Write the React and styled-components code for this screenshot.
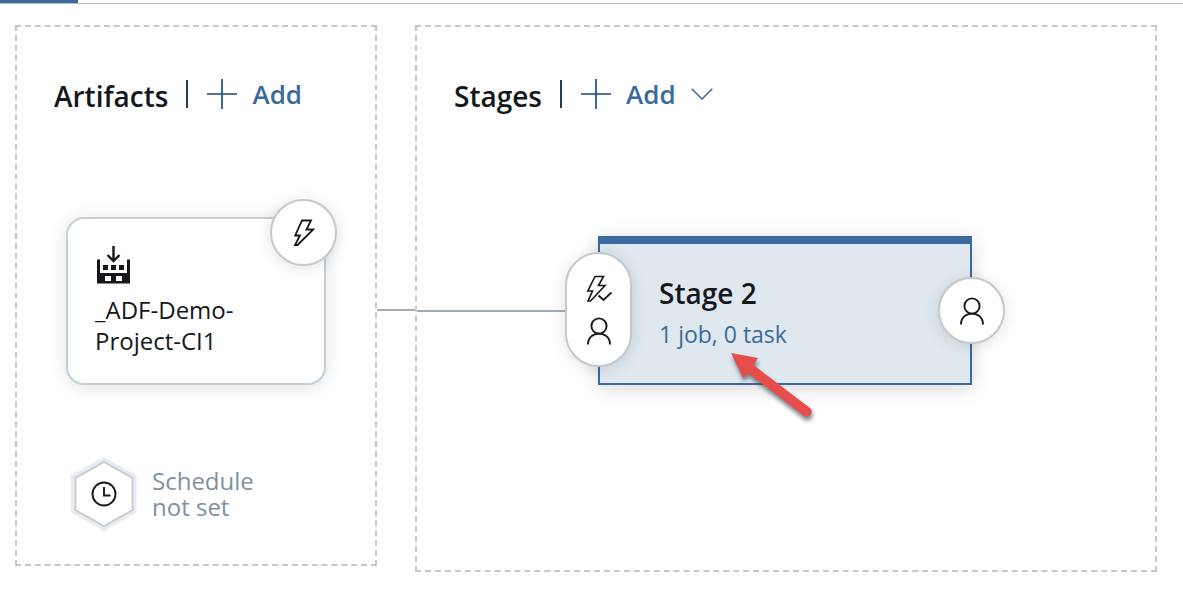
import React from "react";
import styled, { createGlobalStyle } from "styled-components";

const blue = "#3a6a9e";
const ink = "#14181c";
const line = "#c4c9ce";

const GlobalStyle = createGlobalStyle`
  * { box-sizing: border-box; }
  body {
    margin: 0;
    background: #fff;
    color: ${ink};
    font-family: "Open Sans", "Noto Sans", sans-serif;
  }
  h2, h3, p { margin: 0; }
  button { font: inherit; color: inherit; padding: 0; cursor: pointer; }
`;

const TabStrip = styled.div`
  height: 4px;
  border-bottom: 1px solid #b9bdc1;
`;

const ActiveTab = styled.div`
  width: 78px;
  height: 3px;
  background: ${blue};
`;

const Pipeline = styled.main`
  display: flex;
  align-items: flex-start;
  padding: 21px 26px 26px 15px;
`;

const Panel = styled.section`
  flex: ${(p) => (p.$grow ? "1 0 auto" : "0 0 362px")};
  padding: 48px 37px ${(p) => p.$bottom}px;
  border: 2px dashed ${line};
`;

const PanelHeader = styled.header`
  display: flex;
  align-items: flex-start;
  height: 40px;
`;

const PanelTitle = styled.h2`
  padding-right: 18px;
  font-size: 28px;
  font-weight: 600;
  line-height: 42px;
`;

const Divider = styled.span`
  width: 2px;
  height: 28px;
  margin: 5px 19px 0 0;
  background: #1f3d5f;
`;

const AddButton = styled.button`
  display: flex;
  align-items: center;
  gap: 15px;
  border: 0;
  background: none;
  color: ${blue};
  font-size: 26px;
  font-weight: 600;
  line-height: 38px;
`;

const Link = styled.div`
  flex: none;
  width: ${(p) => p.$width}px;
  height: 2px;
  background: #a3adb8;
`;

const PanelLink = styled(Link)`
  margin-top: 284px;
`;

const ArtifactCard = styled.article`
  position: relative;
  width: 260px;
  margin: 102px 0 0 12px;
  padding: 27px 27px 27px;
  border: 2px solid #c5d0da;
  border-radius: 18px;
  background: #fff;
  box-shadow: 0 2px 18px rgba(0, 0, 0, 0.12);
`;

const ArtifactName = styled.h3`
  margin-top: 10px;
  font-size: 24px;
  font-weight: 400;
  line-height: 31px;
`;

const Gate = styled.button`
  position: absolute;
  display: flex;
  flex-direction: column;
  align-items: center;
  justify-content: center;
  gap: 14px;
  width: 67px;
  height: ${(p) => (p.$tall ? 115 : 67)}px;
  border: 2px solid ${line};
  border-radius: 34px;
  background: #fff;
  box-shadow: 0 2px 16px rgba(0, 0, 0, 0.12);
`;

const TriggerGate = styled(Gate)`
  top: -20px;
  right: -13px;
`;

const PreGate = styled(Gate)`
  top: 8px;
  left: -35px;
`;

const PostGate = styled(Gate)`
  top: 33px;
  right: -35px;
`;

const Schedule = styled.button`
  display: flex;
  align-items: center;
  gap: 14px;
  margin: 72px 0 0 16px;
  border: 0;
  background: none;
  color: #8090a2;
  font-size: 24px;
  line-height: 26px;
  text-align: left;
`;

const StageRow = styled.div`
  display: flex;
  align-items: center;
  margin: 121px 0 0 -37px;
`;

const StageCard = styled.article`
  position: relative;
  width: 374px;
  height: 149px;
  padding: 28px 59px;
  border: 2px solid ${blue};
  border-top-width: 8px;
  background: #e0e8ef;
  box-shadow: 0 3px 18px rgba(0, 0, 0, 0.16);
`;

const StageName = styled.h3`
  font-size: 28px;
  font-weight: 600;
  line-height: 42px;
`;

const StageTasks = styled.a`
  color: ${blue};
  font-size: 23px;
  line-height: 40px;
  text-decoration: none;
`;

const Pointer = styled.svg`
  position: absolute;
  top: 106px;
  left: 128px;
  filter: drop-shadow(1px 4px 2px rgba(60, 70, 80, 0.65));
  pointer-events: none;
`;

const BuildGlyph = styled.svg`
  display: block;
  margin-left: 2px;
`;

const PlusIcon = () => (
  <svg width="30" height="30" viewBox="0 0 30 30" aria-hidden="true">
    <path d="M15 0V30" stroke={blue} strokeWidth="2" />
    <path d="M0 15H30" stroke="#2c5078" strokeWidth="1.6" />
  </svg>
);

const ChevronIcon = () => (
  <svg width="22" height="12" viewBox="0 0 22 12" fill="none" aria-hidden="true">
    <path d="M.7 .7L11 11L21.3 .7" stroke={blue} strokeWidth="1.5" />
  </svg>
);

const BoltIcon = () => (
  <svg width="22" height="28" viewBox="0 0 22 28" fill="none" aria-hidden="true">
    <path d="M9 1.5H18L13.5 10.5H20.3L4.5 26H2L7 16.5H2.2Z" stroke={ink} strokeWidth="1.8" />
  </svg>
);

const BoltCheckIcon = () => (
  <svg width="26" height="28" viewBox="0 0 26 28" fill="none" aria-hidden="true">
    <path d="M9 1.5H17.5L12.5 10.5H19L4.5 26H2L6.5 16H1.8Z" stroke={ink} strokeWidth="1.6" />
    <path d="M12.5 20.5L17.5 25L25.5 17.5" stroke="#fff" strokeWidth="4.5" />
    <path d="M12.5 20.5L17.5 25L25.5 17.5" stroke={ink} strokeWidth="1.8" />
  </svg>
);

const PersonIcon = () => (
  <svg width="24" height="28" viewBox="0 0 24 28" fill="none" aria-hidden="true">
    <circle cx="12" cy="9" r="7.6" stroke={ink} strokeWidth="1.9" />
    <path d="M1 27.5C1 20.5 6 16.6 12 16.6S23 20.5 23 27.5" stroke={ink} strokeWidth="1.9" />
  </svg>
);

const BuildIcon = () => (
  <BuildGlyph width="33" height="38" viewBox="0 0 33 38" aria-hidden="true">
    <path d="M16.5 0V14M10.5 9L16.5 15L22.5 9" fill="none" stroke={ink} strokeWidth="2.4" />
    <path
      d="M0 13.5H3V27H30V13.5H33V37.5H0ZM8 30V35H14V30ZM19 30V35H25V30Z"
      fill={ink}
      fillRule="evenodd"
    />
    <path d="M6 19H11V24H6ZM14 19H19V24H14ZM22 19H27V24H22Z" fill={ink} />
  </BuildGlyph>
);

const ClockHexIcon = () => (
  <svg width="68" height="74" viewBox="0 0 68 74" fill="none" aria-hidden="true">
    <path d="M34 3.5L63.5 20V53.5L34 70.5L4 53.5V20Z" stroke="#e5ebf0" strokeWidth="6" />
    <path d="M34 5L62.5 21V53L34 69L5.5 53V21Z" fill="#fff" stroke={line} strokeWidth="1.8" />
    <circle cx="34" cy="37" r="11.5" stroke={ink} strokeWidth="1.9" />
    <path d="M34 30V38.5H40.5" stroke={ink} strokeWidth="1.9" />
  </svg>
);

const PointerArrow = () => (
  <Pointer width="84" height="68" viewBox="0 0 84 68" aria-hidden="true">
    <path
      d="M3 3L30 8L25.5 15L82 58Q85 61 83 64Q80 68 76 66L20 23L15 28Z"
      fill="#e64d4b"
    />
  </Pointer>
);

export default function App() {
  return (
    <>
      <GlobalStyle />
      <TabStrip>
        <ActiveTab />
      </TabStrip>
      <Pipeline>
        <Panel $bottom={33}>
          <PanelHeader>
            <PanelTitle>Artifacts</PanelTitle>
            <Divider />
            <AddButton>
              <PlusIcon />
              Add
            </AddButton>
          </PanelHeader>
          <ArtifactCard>
            <BuildIcon />
            <ArtifactName>
              _ADF-Demo-
              <br />
              Project-CI1
            </ArtifactName>
            <TriggerGate aria-label="Continuous deployment trigger">
              <BoltIcon />
            </TriggerGate>
          </ArtifactCard>
          <Schedule>
            <ClockHexIcon />
            <span>
              Schedule
              <br />
              not set
            </span>
          </Schedule>
        </Panel>
        <PanelLink $width={38} />
        <Panel $grow $bottom={185}>
          <PanelHeader>
            <PanelTitle>Stages</PanelTitle>
            <Divider />
            <AddButton>
              <PlusIcon />
              Add
              <ChevronIcon />
            </AddButton>
          </PanelHeader>
          <StageRow>
            <Link $width={181} />
            <StageCard>
              <StageName>Stage 2</StageName>
              <StageTasks href="#tasks">1 job, 0 task</StageTasks>
              <PreGate $tall aria-label="Pre-deployment conditions">
                <BoltCheckIcon />
                <PersonIcon />
              </PreGate>
              <PostGate aria-label="Post-deployment conditions">
                <PersonIcon />
              </PostGate>
              <PointerArrow />
            </StageCard>
          </StageRow>
        </Panel>
      </Pipeline>
    </>
  );
}
